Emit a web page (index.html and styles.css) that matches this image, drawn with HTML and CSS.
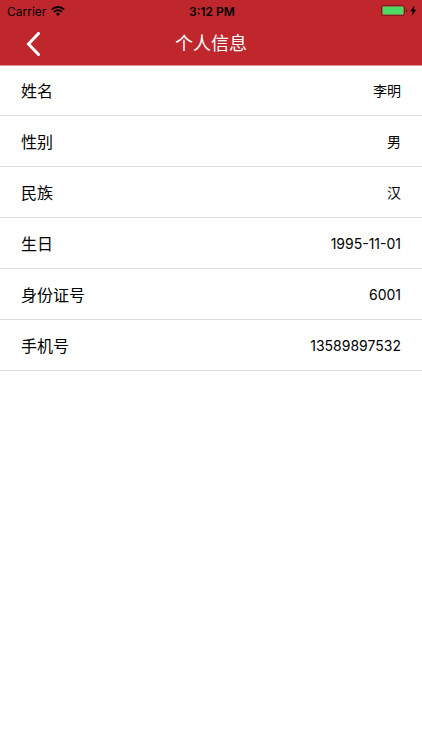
FILE: index.html
```html
<!DOCTYPE html>
<html lang="zh-CN">
<head>
    <meta charset="UTF-8">
    <meta name="viewport" content="width=device-width, initial-scale=1.0">
    <title>个人信息</title>
    <link rel="stylesheet" href="styles.css">
</head>
<body>
    <header class="header">
        <div class="status-bar">
            <div class="carrier">
                <span>Carrier</span>
                <svg class="wifi" width="14" height="10" viewBox="0 0 14 10" aria-hidden="true">
                    <path d="M.8 3.600a8.800 8.800 0 0 1 12.400 0M3 5.900a5.700 5.700 0 0 1 8 0" fill="none" stroke="currentColor" stroke-width="2"/>
                    <path d="M7 10 4.900 7.800a3 3 0 0 1 4.200 0z" fill="currentColor"/>
                </svg>
            </div>
            <div class="time">3:12 PM</div>
            <div class="battery">
                <svg width="36" height="12" viewBox="0 0 36 12" aria-hidden="true">
                    <rect x="0.5" y="0.5" width="23" height="10" rx="2" fill="none" stroke="#7d1a1e"/>
                    <rect x="1.500" y="1.500" width="21" height="8" rx="1" fill="#4cd964"/>
                    <path d="M25 4v3.400q1.200-.5 1.200-1.700T25 4z" fill="#5c1519"/>
                    <path d="M33.500.5 29.300 6.200h2.300L30.800 10.700l4.400-6h-2.400z" fill="#000"/>
                </svg>
            </div>
        </div>
        <nav class="nav-bar">
            <button class="back" type="button" aria-label="返回">
                <svg width="14" height="24" viewBox="0 0 14 24" aria-hidden="true">
                    <path d="M12.500 1.500 2.500 12l10 10.500" fill="none" stroke="currentColor" stroke-width="3" stroke-linecap="round"/>
                </svg>
            </button>
            <h1 class="title">个人信息</h1>
        </nav>
    </header>

    <main>
        <dl class="info-list">
            <div class="info-row"><dt>姓名</dt><dd>李明</dd></div>
            <div class="info-row"><dt>性别</dt><dd>男</dd></div>
            <div class="info-row"><dt>民族</dt><dd>汉</dd></div>
            <div class="info-row"><dt>生日</dt><dd>1995-11-01</dd></div>
            <div class="info-row"><dt>身份证号</dt><dd>6001</dd></div>
            <div class="info-row"><dt>手机号</dt><dd>13589897532</dd></div>
        </dl>
    </main>
</body>
</html>
```
FILE: styles.css
```css
* {
    box-sizing: border-box;
}
body {
    margin: 0;
    background: #fff;
    color: #000;
    font-family: Inter, "Noto Sans CJK SC", sans-serif;
}
.header {
    background: #c0272d;
    box-shadow: 0 1px 0 #dd8d93;
}
.status-bar {
    display: grid;
    grid-template-columns: 1fr auto 1fr;
    align-items: center;
    height: 22px;
    padding: 0 5px 0 7px;
    font-size: 12px;
}
.carrier {
    display: flex;
    align-items: center;
    gap: 5px;
}
.time {
    font-weight: 600;
}
.battery {
    display: flex;
    justify-content: flex-end;
}
.nav-bar {
    display: grid;
    grid-template-columns: 1fr auto 1fr;
    align-items: center;
    height: 43px;
    padding: 0 26px;
    color: #fff;
}
.back {
    display: flex;
    justify-self: start;
    padding: 0;
    border: none;
    background: none;
    color: inherit;
    cursor: pointer;
}
.title {
    margin: 0;
    font-size: 18px;
    font-weight: 400;
    line-height: 24px;
}
.info-list {
    margin: 0;
}
.info-row {
    display: flex;
    justify-content: space-between;
    align-items: center;
    height: 51px;
    padding: 0 21px;
    border-bottom: 1px solid #ddd;
}
.info-row dt {
    font-size: 16px;
}
.info-row dd {
    margin: 0;
    font-size: 14px;
}
```
